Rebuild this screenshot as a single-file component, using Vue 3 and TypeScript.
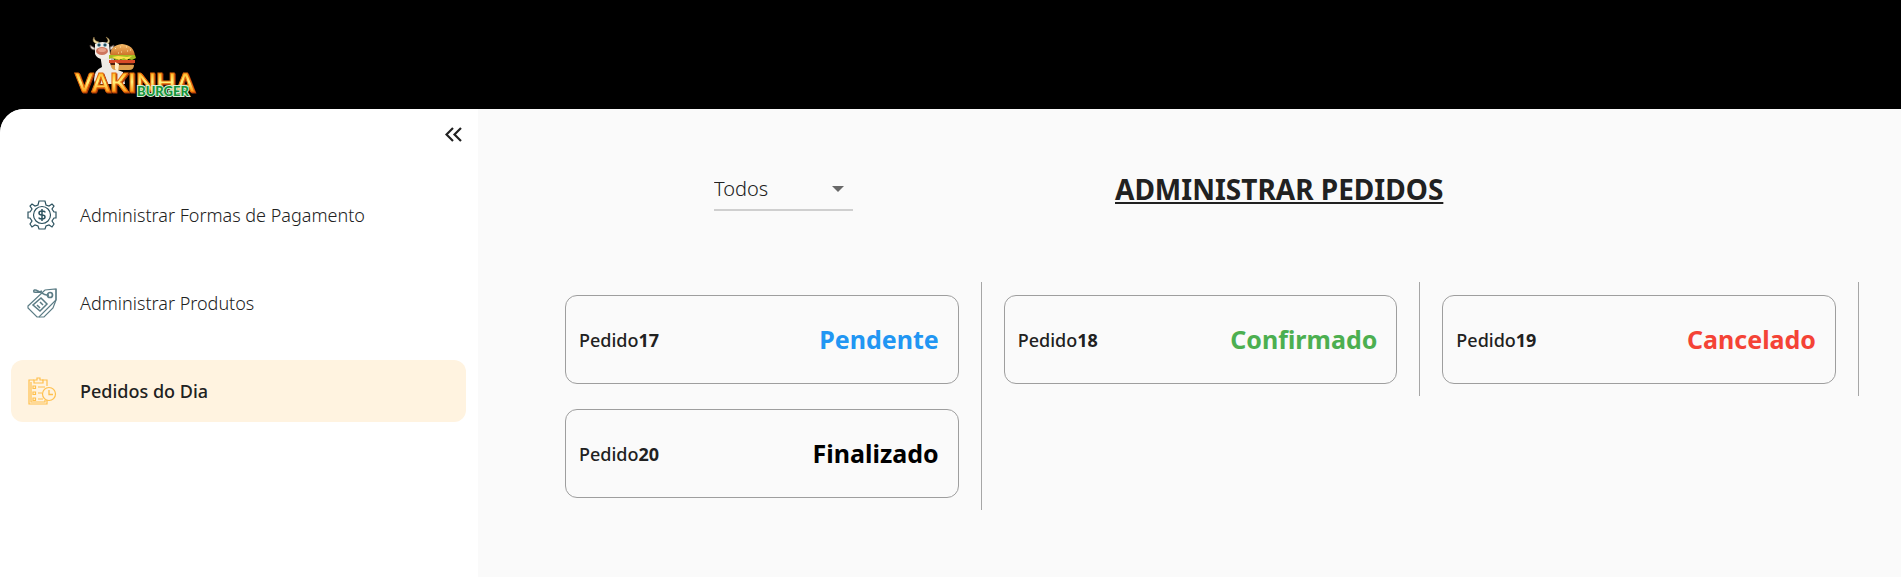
<script setup lang="ts">
import { ref } from 'vue'

type Status = 'Pendente' | 'Confirmado' | 'Cancelado' | 'Finalizado'
interface Order { id: number; status: Status }

const orders: Order[] = [
  { id: 17, status: 'Pendente' },
  { id: 18, status: 'Confirmado' },
  { id: 19, status: 'Cancelado' },
  { id: 20, status: 'Finalizado' },
]
const statuses: Status[] = ['Pendente', 'Confirmado', 'Cancelado', 'Finalizado']
const filter = ref('Todos')
</script>

<template>
  <div class="app">
    <header class="topbar">
      <svg class="logo" viewBox="0 0 124 64" role="img" aria-label="Vakinha Burger">
        <defs>
          <linearGradient id="gold" x1="0" y1="0" x2="0" y2="1">
            <stop offset=".2" stop-color="#ffb51f" />
            <stop offset=".5" stop-color="#fff27e" />
            <stop offset=".8" stop-color="#ff9d16" />
          </linearGradient>
          <linearGradient id="bun" x1="0" y1="0" x2="0" y2="1">
            <stop offset="0" stop-color="#f6bd6b" />
            <stop offset="1" stop-color="#c96c22" />
          </linearGradient>
        </defs>
        <path d="M21 44q0-10 8-13l-2-13h13l2 15 8 3 2 12H22z" fill="#eeeae4" />
        <path d="M38 19l3 2 1 13-4-3z" fill="#b9b3ad" />
        <path d="M22 12l-5-3q0 5 5 5zM37 11l4-2q0 5-4 5z" fill="#ddd6cf" stroke="#574640" stroke-width=".8" />
        <path d="M24 8q-6-2-3-7 0 4 5 5zM33 7q4-2 0-6 6 3 2 7z" fill="#eadba2" stroke="#9b7845" stroke-width=".5" />
        <path d="M22 8q8-4 14 0l1 10q-1 5-7 5t-8-5z" fill="#f3eee8" />
        <ellipse cx="29" cy="15" rx="6" ry="4" fill="#ce765f" />
        <ellipse cx="29" cy="14" rx="4" ry="2" fill="#e8a28a" />
        <circle cx="26" cy="9" r="1.800" fill="#41829c" /><circle cx="32" cy="9" r="1.800" fill="#41829c" />
        <circle cx="26" cy="9" r=".8" fill="#111" /><circle cx="32" cy="9" r=".8" fill="#111" />
        <path d="M37 20q0-11 12-12 12 1 13 12z" fill="url(#bun)" />
        <path d="M42 13l1-1m4-1h1m5 0h1m3 3h1m-10 2h1m-4 1h1m8-2h1" stroke="#ffe6af" stroke-width="1" />
        <path d="M36 19h26l1 3-4 2-4-1-4 2-4-2-4 1-4-2-3 1z" fill="#a4bd20" />
        <path d="M39 21l6-1 9 1 5-1-5 4-3-2-5 2z" fill="#ffe14b" />
        <path d="M36 24h26v3H36z" fill="#d94a27" />
        <path d="M37 27h24l-1 3H38z" fill="#52200d" />
        <path d="M38 29h23q0 5-5 5H43q-5 0-5-5z" fill="#dda04d" />
        <path d="M42 26l4 2-1 8-3-3z" fill="#fff0cb" />
        <text class="logo-main" x="2" y="56">VAKINHA</text>
        <text class="logo-sub" x="64" y="60">BURGER</text>
      </svg>
    </header>

    <div class="body">
      <aside class="sidebar">
        <button class="collapse" type="button" aria-label="Recolher menu">
          <svg viewBox="0 0 17 15"><path d="M8 1L1.500 7.500 8 14M16 1L9.500 7.500 16 14" fill="none" stroke="currentColor" stroke-width="2.200" /></svg>
        </button>
        <nav class="menu">
          <a class="item" href="#pagamento">
            <svg class="icon" viewBox="0 0 30 30" fill="none" stroke="#2d5360" stroke-width="1.200">
              <path d="M12 1h6l1 4 3 1 3-2 2 2-2 3 2 3h2v6h-2l-2 3 2 3-2 3-3-2-3 1-1 3h-6l-1-3-3-1-3 2-2-3 2-3-2-3H1v-6h2l2-3-2-3 2-2 3 2 3-1z" />
              <circle cx="15" cy="15" r="8.500" />
              <path d="M18 12.500q0-1.500-3-1.500t-3 2 3 2 3 2-3 2-3-1.500M15 9v12" stroke-width="1.500" />
            </svg>
            Administrar Formas de Pagamento
          </a>
          <a class="item" href="#produtos">
            <svg class="icon" viewBox="0 0 30 30" fill="none" stroke="#5b7c85" stroke-width="1.200">
              <path d="M1 18L18 2l11-1v11L12 29h-2L1 20z" />
              <path d="M29 12l-3 8-9 9h-5M29 1v11" />
              <circle cx="23" cy="7" r="2.500" stroke-width="1.700" />
              <path d="M22 7C18 8 15 5 11 3 8 1 6 2 7 4q4 1 8-1" stroke-width="1.500" />
              <path d="M14 10l6 6-7 7-7-6zM10 17l3 3M13 14l3 3" stroke-width="1.500" />
            </svg>
            Administrar Produtos
          </a>
          <a class="item active" href="#pedidos" aria-current="page">
            <svg class="icon" viewBox="0 0 30 30" fill="none" stroke="#ffc04d" stroke-width="1.200">
              <path d="M7 4H2v24h18v-4M15 4h5v6M4 6v20h14v-2" />
              <path d="M7 4h3V2h3v2h3v3H7zM6 10h2.500v2.500H6zM6 16h2.500v2.500H6zM6 22h2.500v2.500H6zM11 11h7M11 17h4M11 23h5" />
              <circle cx="22" cy="18" r="6.500" />
              <path d="M22 14v4.500h4" stroke-width="1.300" />
            </svg>
            Pedidos do Dia
          </a>
        </nav>
      </aside>

      <main class="content">
        <div class="heading">
          <div class="filter">
            <select v-model="filter" aria-label="Filtrar por status">
              <option>Todos</option>
              <option v-for="s in statuses" :key="s">{{ s }}</option>
            </select>
            <svg class="arrow" viewBox="0 0 12 6"><path d="M0 0h12L6 6z" fill="#686868" /></svg>
          </div>
          <h1>ADMINISTRAR PEDIDOS</h1>
        </div>
        <div class="orders">
          <div v-for="order in orders" :key="order.id" class="cell">
            <article class="card">
              <span class="name">Pedido<b>{{ order.id }}</b></span>
              <strong class="status" :class="order.status.toLowerCase()">{{ order.status }}</strong>
            </article>
          </div>
        </div>
      </main>
    </div>
  </div>
</template>

<style>
body { margin: 0; background: #000; }
</style>

<style scoped>
.app {
  display: flex;
  flex-direction: column;
  min-height: 100vh;
  background: #000;
  color: #212121;
  font-family: "Noto Sans", "Open Sans", sans-serif;
}
.topbar { height: 109px; box-sizing: border-box; padding: 36px 0 0 73px; }
.logo { display: block; width: 124px; height: 64px; }
.logo-main {
  font: 900 26px Lato, sans-serif;
  fill: url(#gold);
  stroke: #e66b0b;
  stroke-width: 1;
  filter: drop-shadow(1px 1px 0 #a73508);
}
.logo-sub {
  font: 900 13px Lato, sans-serif;
  fill: #16943a;
  stroke: #d8f0d8;
  stroke-width: 2;
  paint-order: stroke;
}
.body { display: flex; flex: 1; overflow: hidden; border-top-left-radius: 24px; background: #fafafa; }
.sidebar { width: 478px; flex: none; background: #fff; }
.collapse {
  display: flex;
  margin: 10px 8px 0 auto;
  padding: 8px;
  border: 0;
  background: none;
  color: #212121;
}
.collapse svg { width: 17px; height: 15px; }
.menu { display: flex; flex-direction: column; gap: 26px; margin: 34px 12px 0 11px; }
.item {
  display: flex;
  align-items: center;
  gap: 23px;
  height: 62px;
  padding-left: 16px;
  border-radius: 12px;
  color: #212121;
  font-size: 18px;
  font-weight: 300;
  text-decoration: none;
}
.item.active { background: #fff3e0; font-weight: 500; }
.icon { width: 30px; height: 30px; }
.content { flex: 1; min-width: 0; padding: 58px 42px 0 65px; }
.heading { display: flex; align-items: center; gap: 262px; padding-left: 171px; }
.filter { display: grid; width: 139px; flex: none; align-items: center; }
.filter > * { grid-area: 1 / 1; }
.filter select {
  appearance: none;
  width: 100%;
  height: 43px;
  padding: 0;
  border: 0;
  border-bottom: 2px solid #cfcfcf;
  border-radius: 0;
  background: transparent;
  color: #212121;
  font: 300 20px "Noto Sans", sans-serif;
}
.arrow { width: 12px; height: 6px; margin-right: 9px; justify-self: end; pointer-events: none; }
h1 {
  margin: 0;
  font-size: 28px;
  font-weight: 700;
  line-height: 44px;
  text-decoration: underline;
  white-space: nowrap;
}
.orders { display: grid; grid-template-columns: repeat(3, 1fr); margin-top: 71px; }
.cell { box-sizing: border-box; height: 114px; padding: 13px 22px 11px 22px; border-right: 1px solid #a6a6a6; }
.card {
  display: flex;
  box-sizing: border-box;
  height: 89px;
  align-items: center;
  justify-content: space-between;
  padding: 0 19px 0 13px;
  border: 1px solid #9e9e9e;
  border-radius: 12px;
}
.name { font-size: 18px; font-weight: 500; }
.name b { font-weight: 700; }
.status { padding-bottom: 2px; font-size: 25px; font-weight: 700; }
.pendente { color: #2196f3; }
.confirmado { color: #4caf50; }
.cancelado { color: #f44336; }
.finalizado { color: #000; }
</style>
